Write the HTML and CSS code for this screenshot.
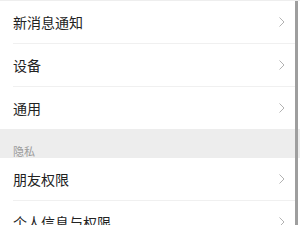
FILE: index.html
```html
<!DOCTYPE html>
<html lang="zh">
<head>
<meta charset="utf-8">
<link rel="stylesheet" href="styles.css">
</head>
<body>
<div class="page">
  <div class="group">
    <div class="row"><span class="label">新消息通知</span><svg class="chev" viewBox="0 0 6 10"><path d="M0.5 0.5 L5 5 L0.5 9.5" /></svg></div>
    <div class="row"><span class="label">设备</span><svg class="chev" viewBox="0 0 6 10"><path d="M0.5 0.5 L5 5 L0.5 9.5" /></svg></div>
    <div class="row"><span class="label">通用</span><svg class="chev" viewBox="0 0 6 10"><path d="M0.5 0.5 L5 5 L0.5 9.5" /></svg></div>
  </div>
  <div class="section">隐私</div>
  <div class="group">
    <div class="row"><span class="label">朋友权限</span><svg class="chev" viewBox="0 0 6 10"><path d="M0.5 0.5 L5 5 L0.5 9.5" /></svg></div>
    <div class="row"><span class="label">个人信息与权限</span><svg class="chev" viewBox="0 0 6 10"><path d="M0.5 0.5 L5 5 L0.5 9.5" /></svg></div>
  </div>
  <div class="scrollbar"></div>
</div>
</body>
</html>
```
FILE: styles.css
```css
html, body {
  margin: 0;
  padding: 0;
  background: #ffffff;
  overflow: hidden;
}
.page {
  position: relative;
  width: 300px;
  height: 225px;
  overflow: hidden;
  font-family: "Noto Sans CJK SC", "Noto Sans", sans-serif;
  border-top: 1px solid #eeeeee;
  box-sizing: border-box;
}
.group {
  display: flex;
  flex-direction: column;
  padding-left: 13px;
  padding-right: 5px;
}
.row {
  display: flex;
  align-items: center;
  justify-content: space-between;
  height: 42px;
  padding-right: 10px;
  border-bottom: 1px solid #f0f0f0;
}
.row:last-child {
  border-bottom: none;
}
.label {
  font-size: 14px;
  color: #222222;
  line-height: 1;
}
.chev {
  width: 6px;
  height: 10px;
  fill: none;
  stroke: #b2b2b2;
  stroke-width: 1;
}
.section {
  background: #ededed;
  height: 29px;
  box-sizing: border-box;
  padding: 14px 0 0 13px;
  font-size: 11px;
  line-height: 16px;
  color: #9a9a9a;
}
.scrollbar {
  position: absolute;
  top: 0;
  right: 2px;
  width: 3px;
  height: 225px;
  background: #9e9e9e;
}
```
